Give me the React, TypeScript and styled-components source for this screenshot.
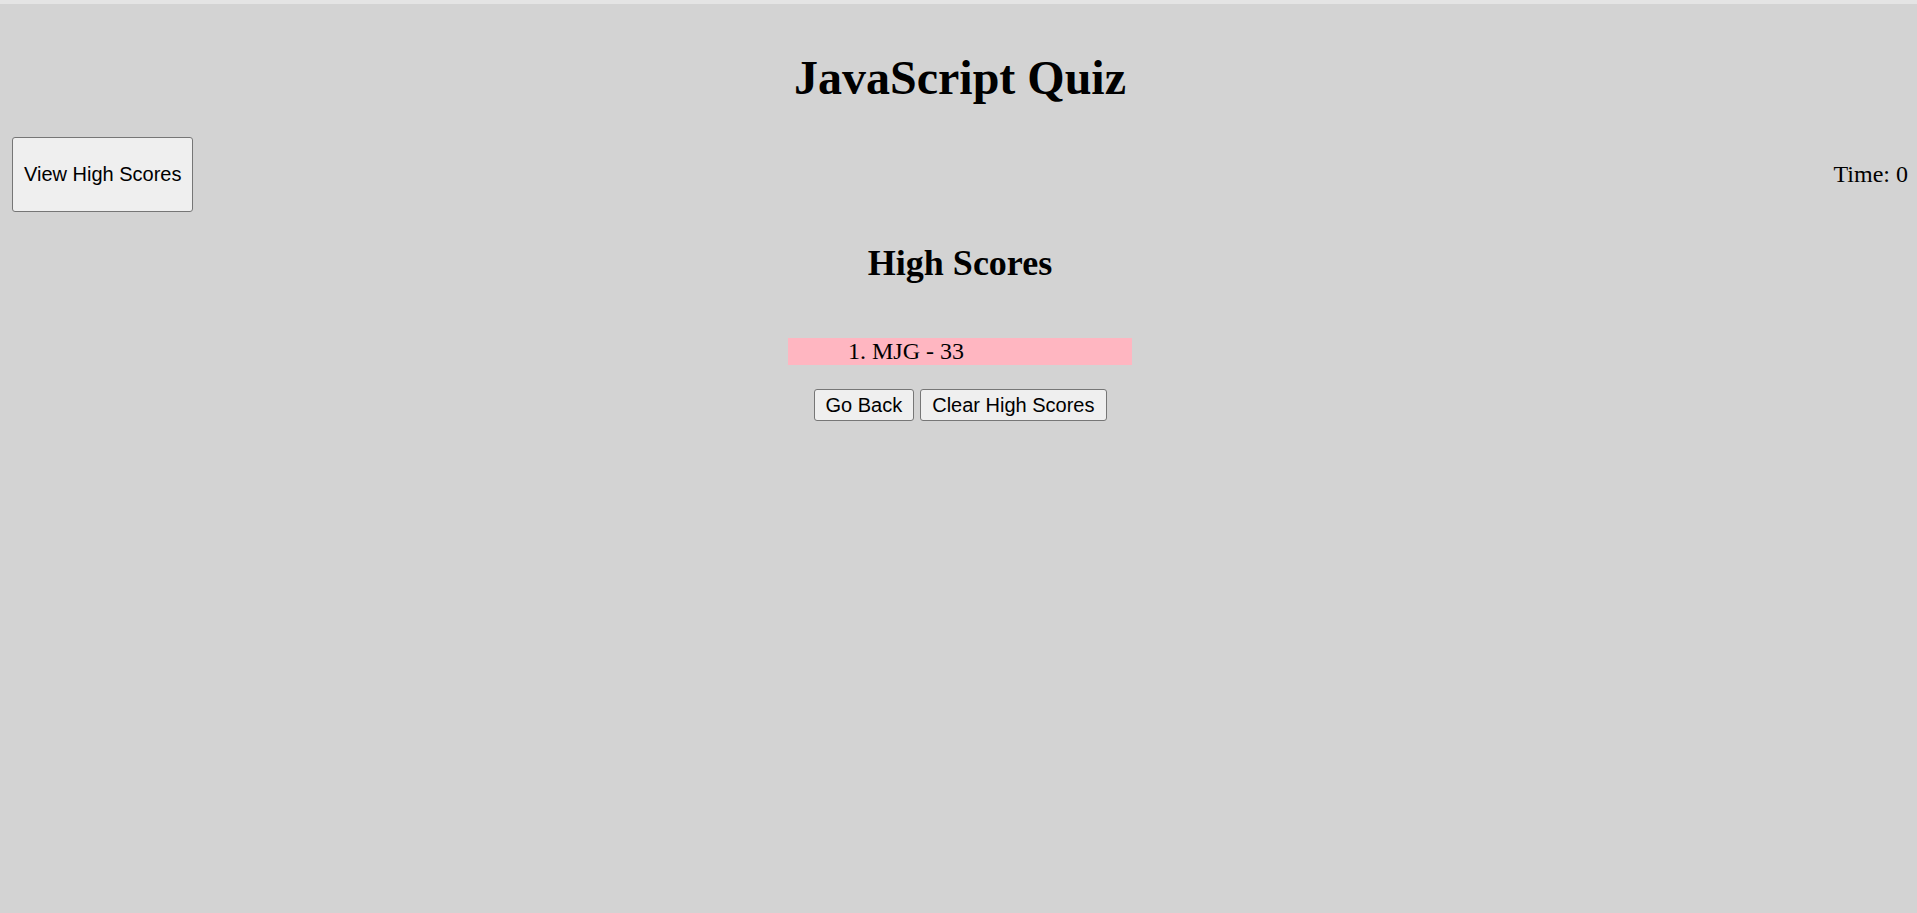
import React from "react";
import styled, { createGlobalStyle } from "styled-components";

const GlobalStyle = createGlobalStyle`
  html, body {
    margin: 0;
    padding: 0;
    background: #d3d3d3;
  }
  body {
    font-family: "Liberation Serif", "Times New Roman", serif;
    font-size: 24px;
    color: #000;
  }
`;

const TopStrip = styled.div`
  height: 4px;
  background: #e4e4e4;
`;

const Page = styled.div`
  padding: 14px 9px 0 12px;
`;

const Title = styled.h1`
  margin: 32px 0;
  font-size: 48px;
  font-weight: bold;
  text-align: center;
  line-height: normal;
`;

const NavBar = styled.div`
  display: flex;
  justify-content: space-between;
  align-items: center;
  margin-top: 2px;
`;

const Button = styled.button<{ $tall?: boolean }>`
  font-family: "Liberation Sans", Arial, sans-serif;
  font-size: 20px;
  line-height: 23px;
  color: #000;
  background: #efefef;
  border: 1px solid #767676;
  border-radius: 3px;
  padding: 0 11px;
  height: ${(p) => (p.$tall ? "75px" : "32px")};
  cursor: pointer;
`;

const Timer = styled.span`
  font-size: 24px;
`;

const Section = styled.section`
  text-align: center;
`;

const SubTitle = styled.h2`
  margin: 30px 0;
  font-size: 36px;
  font-weight: bold;
  line-height: normal;
`;

const ScoreList = styled.ul`
  list-style: none;
  width: 344px;
  box-sizing: border-box;
  margin: 54px auto 24px;
  padding: 0 0 0 60px;
  background: #ffb6c1;
  text-align: left;
`;

const ScoreItem = styled.li`
  font-size: 24px;
  line-height: 27px;
`;

const Actions = styled.div`
  display: flex;
  justify-content: center;
  gap: 6px;
`;

export default function App() {
  return (
    <>
      <GlobalStyle />
      <TopStrip />
      <Page>
        <Title>JavaScript Quiz</Title>
        <NavBar>
          <Button $tall>View High Scores</Button>
          <Timer>Time: 0</Timer>
        </NavBar>
        <Section>
          <SubTitle>High Scores</SubTitle>
          <ScoreList>
            <ScoreItem>1. MJG - 33</ScoreItem>
          </ScoreList>
          <Actions>
            <Button>Go Back</Button>
            <Button>Clear High Scores</Button>
          </Actions>
        </Section>
      </Page>
    </>
  );
}
